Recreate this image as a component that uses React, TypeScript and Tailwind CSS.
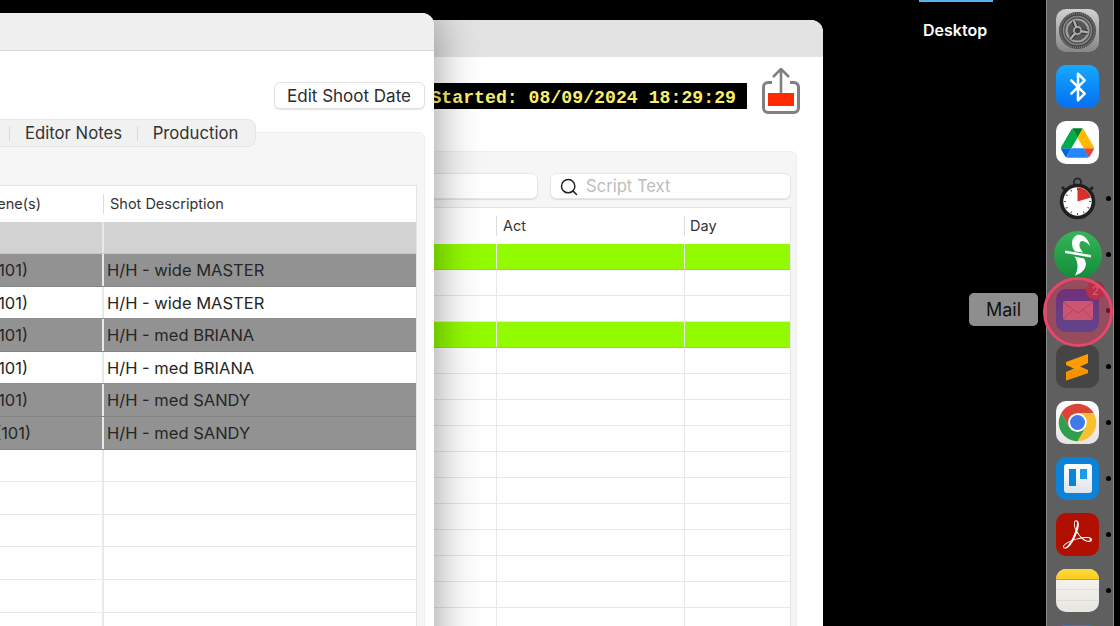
import { Bluetooth, Search } from "lucide-react";
import { SiAdobeacrobatreader } from "react-icons/si";

const sans = "[font-family:Inter,'Liberation_Sans',sans-serif]";

const blank = { bg: "bg-white", line: "border-[#e8e8e8]", sc: "", desc: "" };
const frontRows = [
  { bg: "bg-[#d2d2d2]", line: "border-[#c8c8c8]", sc: "", desc: "" },
  { bg: "bg-[#929292]", line: "border-[#858585]", sc: "(101)", desc: "H/H - wide MASTER" },
  { bg: "bg-white", line: "border-[#8f8f8f]", sc: "(101)", desc: "H/H - wide MASTER" },
  { bg: "bg-[#929292]", line: "border-[#858585]", sc: "(101)", desc: "H/H - med BRIANA" },
  { bg: "bg-white", line: "border-[#8f8f8f]", sc: "(101)", desc: "H/H - med BRIANA" },
  { bg: "bg-[#929292]", line: "border-[#858585]", sc: "(101)", desc: "H/H - med SANDY" },
  { bg: "bg-[#929292]", line: "border-[#858585]", sc: "(101)", desc: "H/H - med SANDY", last: true },
  blank, blank, blank, blank, blank, blank, blank,
];

const backRows = Array.from({ length: 15 }, (_, i) => i === 0 || i === 3);

function FrontWindow() {
  return (
    <div className="absolute left-[-100px] top-[13px] z-10 flex h-[700px] w-[534px] flex-col rounded-tr-[12px] bg-white shadow-[0_0_46px_rgba(0,0,0,0.42)]">
      <div className="h-[38px] shrink-0 rounded-tr-[12px] border-b border-[#dcdcdc] bg-[#f0f0f0]" />
      <div className="flex justify-end pr-[9px] pt-[31px]">
        <button className={`h-[27px] w-[151px] rounded-[6px] border border-[#e2e2e2] bg-white pr-[1px] pt-[1px] text-[17px] leading-none text-[#2b2b2b] shadow-[0_1px_1px_rgba(0,0,0,0.12)] ${sans}`}>
          Edit Shoot Date
        </button>
      </div>
      <div className="relative z-10 mt-[10px] flex justify-end pr-[178px]">
        <div className={`flex h-[28px] items-center rounded-[8px] border border-[#e6e6e6] bg-[#f1f1f1] pt-[1px] text-[16.7px] text-[#333333] ${sans}`}>
          <span className="w-[100px]" />
          <span className="h-[15px] w-px bg-[#d8d8d8]" />
          <span className="w-[127px] text-center">Editor Notes</span>
          <span className="h-[15px] w-px bg-[#d8d8d8]" />
          <span className="w-[117px] pr-[2px] text-center">Production</span>
        </div>
      </div>
      <div className="mr-[9px] mt-[-15px] flex-1 rounded-[6px] border border-[#eeeeee] bg-[#f6f6f6] pr-[7.5px] pt-[52px]">
        <div className="border border-[#e4e4e4] bg-white">
          <div className={`flex h-[35.5px] items-center text-[14.5px] text-[#333333] ${sans}`}>
            <div className="flex h-[20px] w-[202px] items-center justify-end border-r border-[#dddddd] pr-[62px]">Scene(s)</div>
            <div className="pl-[6px]">Shot Description</div>
          </div>
          {frontRows.map((r, i) => (
            <div key={i} className={`flex h-[32.6px] items-center border-b ${r.bg} ${r.line} text-[16.5px] text-[#262626] ${sans}`}>
              <div className={`flex h-full w-[202px] items-center justify-end border-r-2 border-[#e8e8e8] pt-[1px] ${r.last ? "pr-[71px]" : "pr-[74px]"}`}>{r.sc}</div>
              <div className="pl-[3px] pt-[1px]">{r.desc}</div>
            </div>
          ))}
        </div>
      </div>
    </div>
  );
}

function ShareIcon() {
  return (
    <svg width="38" height="47" viewBox="0 0 38 47" fill="none">
      <path d="M10 14.500H6a4.500 4.500 0 0 0-4.500 4.500v21A4.500 4.500 0 0 0 6 44.500h26a4.500 4.500 0 0 0 4.500-4.500V19a4.500 4.500 0 0 0-4.500-4.500h-4" stroke="#808080" strokeWidth="3" />
      <path d="M19 30V2M11 9l8-8 8 8" stroke="#808080" strokeWidth="2.6" />
      <rect x="6" y="25" width="26" height="13" fill="#ff2a00" />
    </svg>
  );
}

function BackWindow() {
  return (
    <div className="absolute left-[300px] top-[20px] flex h-[700px] w-[523px] flex-col rounded-tr-[12px] bg-white">
      <div className="h-[37px] shrink-0 rounded-tr-[12px] bg-[#e3e3e3]" />
      <div className="flex h-[94px] shrink-0 items-start justify-end pr-[23px] pt-[11px]">
        <div className="mr-[15px] mt-[15px] flex h-[26px] items-center bg-black pl-[90px] pr-[11px] pt-[6px] text-[18.2px] font-bold text-[#f7f06c] [font-family:'Liberation_Mono',monospace]">
          Started: 08/09/2024 18:29:29
        </div>
        <ShareIcon />
      </div>
      <div className="mr-[26px] flex-1 rounded-[6px] border border-[#eeeeee] bg-[#f6f6f6] pl-[5px] pr-[5px] pt-[21px]">
        <div className="flex gap-[12px]">
          <div className="h-[26px] flex-1 rounded-[6px] border border-[#e6e6e6] bg-white shadow-[0_1px_1px_rgba(0,0,0,0.1)]" />
          <div className={`flex h-[26px] w-[241px] items-center gap-[7px] rounded-[6px] border border-[#e6e6e6] bg-white pl-[8px] pt-[1px] text-[16.6px] text-[#bdbdbd] shadow-[0_1px_1px_rgba(0,0,0,0.1)] ${sans}`}>
            <Search size={20} strokeWidth={1.8} className="text-[#222222]" />
            Script Text
          </div>
        </div>
        <div className="mt-[8px] border border-[#e4e4e4] bg-white">
          <div className={`flex h-[36px] items-center text-[14.5px] text-[#333333] ${sans}`}>
            <div className="h-[20px] w-[190px] border-r border-[#dddddd]" />
            <div className="flex h-[20px] w-[188px] items-center border-r border-[#dddddd] pl-[6px]">Act</div>
            <div className="pl-[5px]">Day</div>
          </div>
          {backRows.map((g, i) => (
            <div key={i} className={`flex h-[26px] border-b ${g ? "border-[#8ce800] bg-[#92fb00]" : "border-[#e8e8e8] bg-white"}`}>
              <div className="w-[190px] border-r border-[#e8e8e8]" />
              <div className="w-[188px] border-r border-[#e8e8e8]" />
            </div>
          ))}
        </div>
      </div>
    </div>
  );
}

function Tile({ className, children }: { className: string; children?: React.ReactNode }) {
  return <div className={`flex h-[43px] w-[43px] shrink-0 items-center justify-center overflow-hidden rounded-[10px] ${className}`}>{children}</div>;
}

function GearIcon() {
  const angles = [-110, 10, 130];
  return (
    <Tile className="bg-linear-to-b from-[#cfd2d3] to-[#868686]">
      <svg width="39" height="39" viewBox="0 0 39 39" fill="none">
        <circle cx="19.5" cy="19.5" r="18.5" fill="#454545" />
        <circle cx="19.5" cy="19.5" r="17" stroke="#7c7c7c" strokeWidth="2" strokeDasharray="1 1" />
        <circle cx="19.5" cy="19.5" r="14" stroke="#848484" strokeWidth="1.6" fill="#484848" />
        <circle cx="19.5" cy="19.5" r="11" stroke="#a0a0a0" strokeWidth="2.2" fill="#565656" />
        {angles.map((a) => (
          <g key={a} transform={`rotate(${a} 19.500 19.500)`}>
            <path d="M19.500 19.500H30" stroke="#2e2e2e" strokeWidth="4.4" />
            <path d="M19.500 19.500H30" stroke="#b0b0b0" strokeWidth="2.4" />
          </g>
        ))}
        <circle cx="19.5" cy="19.5" r="3.6" fill="#404040" stroke="#b0b0b0" strokeWidth="1.6" />
      </svg>
    </Tile>
  );
}

function DriveIcon() {
  return (
    <Tile className="bg-white">
      <svg width="33" height="30" viewBox="0 0 87.3 78">
        <path d="m6.6 66.85 3.85 6.65c.8 1.4 1.95 2.5 3.3 3.3l13.75-23.8h-27.5c0 1.55.4 3.1 1.2 4.5z" fill="#0066da" />
        <path d="m43.65 25-13.75-23.8c-1.35.8-2.5 1.9-3.3 3.3l-25.4 44a9.06 9.06 0 0 0 -1.2 4.5h27.5z" fill="#00ac47" />
        <path d="m73.55 76.8c1.35-.8 2.5-1.9 3.3-3.3l1.6-2.75 7.65-13.25c.8-1.4 1.2-2.95 1.2-4.5h-27.502l5.852 11.5z" fill="#ea4335" />
        <path d="m43.65 25 13.75-23.8c-1.35-.8-2.9-1.2-4.5-1.2h-18.5c-1.6 0-3.15.45-4.5 1.2z" fill="#00832d" />
        <path d="m59.8 53h-32.3l-13.75 23.8c1.35.8 2.9 1.2 4.5 1.2h50.8c1.6 0 3.15-.45 4.5-1.2z" fill="#2684fc" />
        <path d="m73.4 26.5-12.7-22c-.8-1.4-1.95-2.5-3.3-3.3l-13.75 23.8 16.15 28h27.45c0-1.55-.4-3.1-1.2-4.5z" fill="#ffba00" />
      </svg>
    </Tile>
  );
}

function StopwatchIcon() {
  const ticks = Array.from({ length: 12 }, (_, i) => i * 30);
  return (
    <svg width="43" height="43" viewBox="0 0 43 43" fill="none" className="shrink-0">
      <circle cx="21.5" cy="5" r="3.6" stroke="#2a2a2a" strokeWidth="2" />
      <rect x="19.8" y="7" width="3.4" height="4" fill="#222222" />
      <path d="M6 10l3 3M37 10l-3 3" stroke="#222222" strokeWidth="2.6" />
      <circle cx="21.5" cy="24.500" r="16" fill="#ffffff" stroke="#1f1f1f" strokeWidth="3.6" />
      <path d="M21.5 24.500V10.500A14 14 0 0 1 35 20.500z" fill="#d8302a" />
      {ticks.map((a) => (
        <rect key={a} x="21" y="36" width="1" height="2" fill="#555555" transform={`rotate(${a} 21.5 24.500)`} />
      ))}
    </svg>
  );
}

function ScrivenerIcon() {
  return (
    <div className="mx-[-2.5px] my-[-2.5px] flex h-[48px] w-[48px] shrink-0 items-center justify-center rounded-full bg-linear-to-b from-[#35b558] to-[#118c3a]">
      <svg width="48" height="48" viewBox="0 0 48 48" fill="#ffffff">
        <path d="M23 4C27 2.500 34 6 36 15 33 11.500 30.500 10 28 10 25.500 10 25 14 26 17L29 21.500 21 20.500C17 16 16.500 7 23 4z" />
        <path d="M11 19.500L37 24V26.500L11 22z" />
        <path d="M20.500 25.500L30 27.500C34 33 32 41 21 44.500 24 39 25 32 20.500 25.500z" />
      </svg>
    </div>
  );
}

function MailIcon() {
  return (
    <div className="relative shrink-0">
      <Tile className="bg-linear-to-b from-[#1f2e91] to-[#0053ac]">
        <svg width="30" height="19" viewBox="0 0 30 19">
          <rect width="30" height="19" rx="2" fill="#be6e82" />
          <path d="M0 1l15 11L30 1M0 18l10-9M30 18 20 9" stroke="#8f5068" strokeWidth="1" fill="none" />
        </svg>
      </Tile>
      <div className="absolute right-[-6px] top-[-8px] flex h-[19px] w-[19px] items-center justify-center rounded-full bg-[#9b2e3e] text-[12px] text-[#d08a8a] [font-family:Inter,sans-serif]">2</div>
    </div>
  );
}

function SublimeIcon() {
  return (
    <Tile className="bg-[#454545]">
      <svg width="43" height="43" viewBox="0 0 43 43">
        <path d="M10 17L32 9V18L24 21.500 32 25V28L10 35.500V27L18 23.500 10 20z" fill="#ff9d00" />
        <path d="M10 27.500L18 24 32 25.500V28L10 35.500z" fill="#f59200" />
      </svg>
    </Tile>
  );
}

function ChromeIcon() {
  return (
    <Tile className="bg-linear-to-b from-white to-[#e4e4e4]">
      <svg width="45" height="45" viewBox="0 0 48 48" className="shrink-0">
        <path d="M6.680 14A20 20 0 0 1 41.320 14L24 14 15.340 29z" fill="#db4437" />
        <path d="M41.320 14A20 20 0 0 1 24 44L32.660 29 24 14z" fill="#fbc02d" />
        <path d="M24 44A20 20 0 0 1 6.680 14L15.340 29 32.660 29z" fill="#2f9e4f" />
        <circle cx="24" cy="24" r="10" fill="#ffffff" />
        <circle cx="24" cy="24" r="8" fill="#3f7be8" />
      </svg>
    </Tile>
  );
}

function TrelloIcon() {
  return (
    <Tile className="bg-[#0c82d8]">
      <div className="flex h-[29px] w-[28px] items-start gap-[4px] rounded-[3px] bg-linear-to-b from-white to-[#dfe3ea] p-[5px]">
        <div className="h-[17px] w-[8px] bg-[#0c82d8]" />
        <div className="h-[10px] w-[7px] bg-[#1a9ae8]" />
      </div>
    </Tile>
  );
}

function AcrobatIcon() {
  return (
    <Tile className="bg-[#b10f00]">
      <SiAdobeacrobatreader size={29} color="#ffffff" />
    </Tile>
  );
}

function NotesIcon() {
  return (
    <Tile className="flex-col justify-start bg-linear-to-b from-[#f7f5f0] to-[#e8e6e0]">
      <div className="h-[11px] w-full shrink-0 border-b border-[#d9a800] bg-linear-to-b from-[#ffdb3c] to-[#fccb1c]" />
      <div className="mt-[9px] h-px w-full shrink-0 bg-[#dddddd]" />
      <div className="mt-[10px] h-px w-full shrink-0 bg-[#dddddd]" />
    </Tile>
  );
}

const dock = [
  { icon: <GearIcon /> },
  { icon: <Tile className="bg-linear-to-b from-[#19a8ff] to-[#0a6ef0]"><Bluetooth size={32} color="#ffffff" strokeWidth={1.9} /></Tile> },
  { icon: <DriveIcon /> },
  { icon: <StopwatchIcon />, dot: true },
  { icon: <ScrivenerIcon />, dot: true },
  { icon: <MailIcon />, dot: true },
  { icon: <SublimeIcon />, dot: true },
  { icon: <ChromeIcon />, dot: true },
  { icon: <TrelloIcon />, dot: true },
  { icon: <AcrobatIcon />, dot: true },
  { icon: <NotesIcon />, dot: true },
  { icon: <Tile className="bg-[#3a6fd8]" /> },
];

function Dock() {
  return (
    <div className="mr-[6px] flex h-[626px] w-[68px] flex-col gap-[13px] overflow-hidden border-x border-[#8a8a8a] bg-[#5f5f5f] pl-[9px] pt-[9px]">
      {dock.map((d, i) => (
        <div key={i} className="flex h-[43px] shrink-0 items-center gap-[6.5px]">
          {d.icon}
          {d.dot && <span className="h-[5px] w-[5px] rounded-full bg-black" />}
        </div>
      ))}
    </div>
  );
}

export default function App() {
  return (
    <div className="relative flex h-[626px] w-[1120px] justify-end overflow-hidden bg-black">
      <BackWindow />
      <FrontWindow />
      <div className="absolute left-[919px] top-0 h-[2px] w-[74px] bg-[#5ab0e8]" />
      <div className={`absolute left-[923px] top-[18px] text-[16px] font-semibold text-white ${sans}`}>Desktop</div>
      <Dock />
      <div className={`absolute left-[969px] top-[293px] flex h-[33px] w-[69px] items-center justify-center rounded-[5px] bg-[#8e8e8e] text-[18px] text-[#111111] ${sans}`}>Mail</div>
      <div className="absolute left-[1043px] top-[277px] h-[70px] w-[70px] rounded-full border-[3px] border-[#e8466a] bg-[rgba(225,50,90,0.42)]" />
    </div>
  );
}
